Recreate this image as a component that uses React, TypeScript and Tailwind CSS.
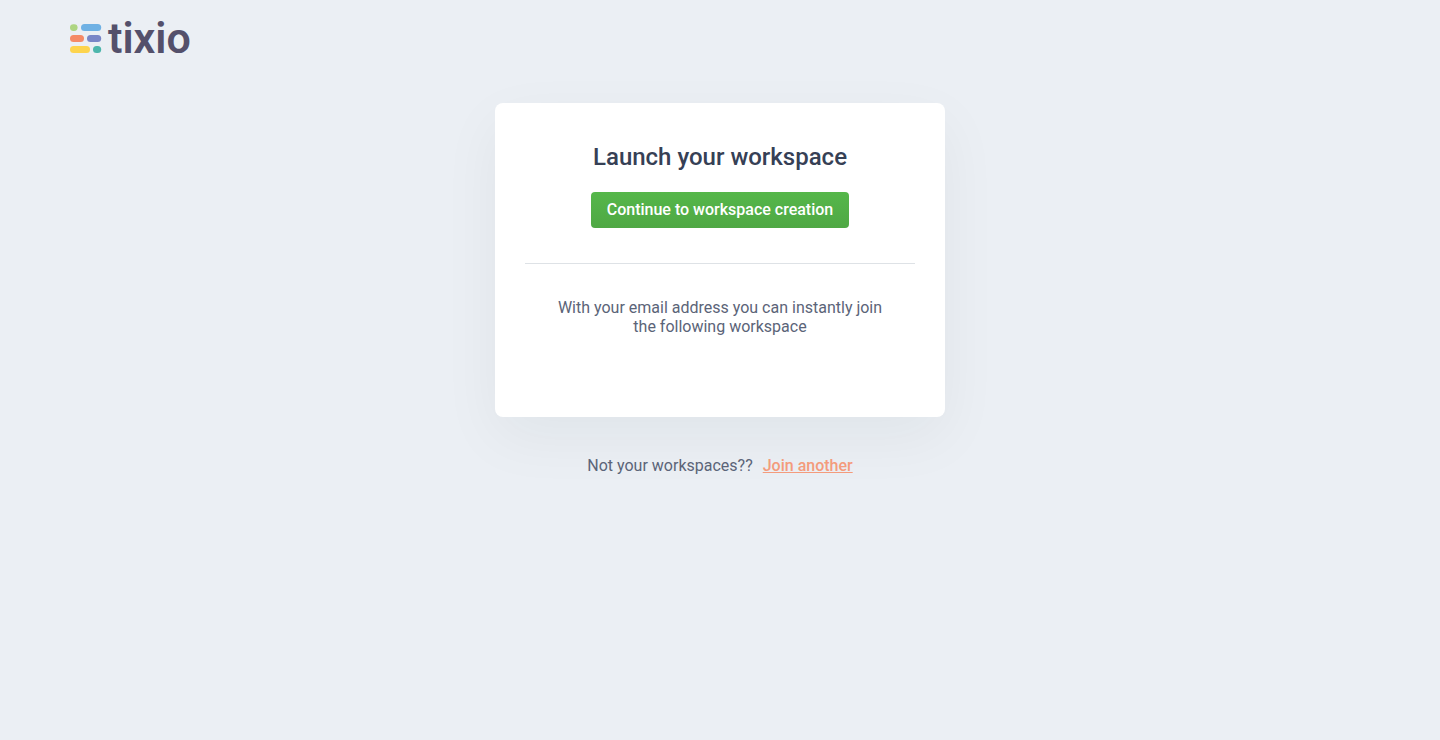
function Logo() {
  return (
    <a href="#" aria-label="Tixio home" className="flex items-end gap-1.5">
      <svg className="mb-0.5" width="32" height="30" viewBox="0 0 32 30" aria-hidden="true">
        <rect x="0" y="0.2" width="7.6" height="6.8" rx="3.4" fill="#aed581" />
        <rect x="11" y="0" width="20.2" height="7" rx="3.5" fill="#6fb1e4" />
        <rect x="0" y="11" width="14" height="7" rx="3.5" fill="#f58a67" />
        <rect x="17" y="11" width="14.2" height="7" rx="3.5" fill="#7986c7" />
        <rect x="0" y="22" width="20" height="7" rx="3.5" fill="#fdd44d" />
        <rect x="23" y="22" width="8.2" height="7" rx="3.5" fill="#4db6ac" />
      </svg>
      <span className="font-[Roboto,sans-serif] text-[43px] leading-9 font-semibold text-[#54506b]">
        tixio
      </span>
    </a>
  );
}

export default function App() {
  return (
    <div className="min-h-screen bg-[#ebeff4] font-[Roboto,sans-serif] text-base leading-[19px] text-[#5b6478]">
      <header className="flex px-[70px] pt-5 pb-[47px]">
        <Logo />
      </header>
      <main className="flex flex-col items-center px-4 text-center">
        <section className="w-full max-w-[450px] rounded-lg bg-white px-[30px] pt-10 pb-[81px] shadow-[0_20px_60px_rgba(0,30,30,0.05)]">
          <h1 className="text-2xl leading-7 font-medium text-[#364055]">Launch your workspace</h1>
          <button
            type="button"
            className="mt-[21px] h-9 rounded bg-linear-to-b from-[#55b74a] to-[#4fa844] px-4 pb-[2px] font-medium text-white"
          >
            Continue to workspace creation
          </button>
          <hr className="mt-[35px] border-[#dee2e6]" />
          <p className="mx-auto mt-[34px] max-w-[340px]">
            With your email address you can instantly join the following workspace
          </p>
        </section>
        <p className="mt-[39px] flex flex-wrap justify-center gap-x-[10px]">
          Not your workspaces??
          <a href="#" className="font-medium text-[#f49b7c] underline">
            Join another
          </a>
        </p>
      </main>
    </div>
  );
}
